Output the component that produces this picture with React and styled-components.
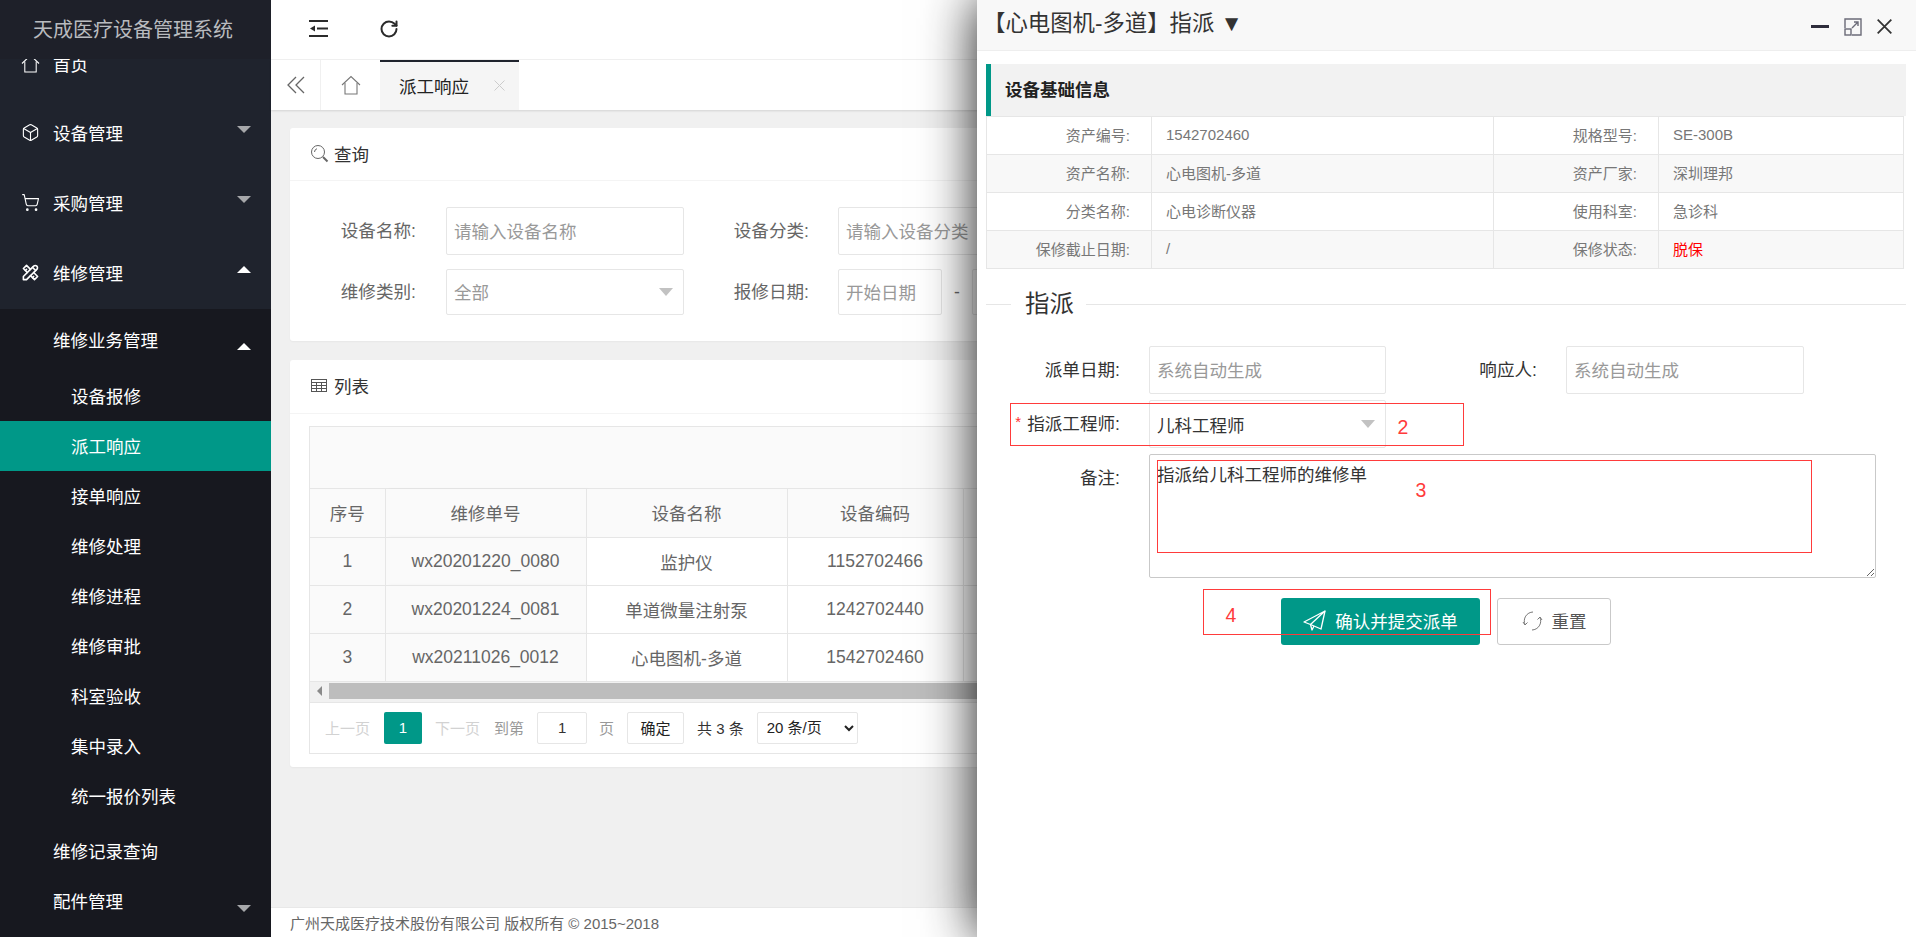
import React from "react";
import styled, { createGlobalStyle } from "styled-components";
import { Box, ShoppingCart, RotateCw } from "lucide-react";
import { TbTools } from "react-icons/tb";

const GlobalStyle = createGlobalStyle`
  * { box-sizing: border-box; }
  html, body { margin: 0; padding: 0; height: 100%; overflow: hidden; }
  body {
    font-family: "Liberation Sans", "Noto Sans CJK SC", sans-serif;
    font-size: 15px;
    color: #666;
    background: #f0f0f0;
  }
  input::placeholder, textarea::placeholder { color: #999; opacity: 1; }
`;

const Page = styled.div`
  position: relative;
  display: flex;
  width: 1916px;
  height: 937px;
  overflow: hidden;
`;

/* ---------- sidebar ---------- */
const Sidebar = styled.aside`
  flex: 0 0 271px;
  height: 100%;
  display: flex;
  flex-direction: column;
  background: #1f232d;
  color: #fff;
  overflow: hidden;
`;

const Logo = styled.div`
  position: relative;
  z-index: 1;
  flex: 0 0 59px;
  padding: 0 5px 3px 0;
  display: flex;
  align-items: center;
  justify-content: center;
  background: #1e2029;
  color: #b9bbbf;
  font-size: 20px;
`;

const Menu = styled.nav`
  margin-top: -29px;
`;

const MenuItem = styled.div`
  position: relative;
  height: ${(p) => p.$h || 70}px;
  display: flex;
  align-items: center;
  gap: 13px;
  padding: 0 0 2px 21px;
  font-size: 17.5px;
  svg { flex: 0 0 19px; }
`;

const Arrow = styled.i`
  position: absolute;
  right: 20px;
  top: ${(p) => p.$top}px;
  width: 0;
  height: 0;
  border-left: 7px solid transparent;
  border-right: 7px solid transparent;
  border-top: ${(p) => (p.$up ? "0" : "7px solid #a6a7aa")};
  border-bottom: ${(p) => (p.$up ? "7px solid #fff" : "0")};
`;

const SubMenu = styled.div`
  margin-top: 1px;
  background: #17181f;
  padding-bottom: 60px;
`;

const SubTitle = styled.div`
  position: relative;
  height: ${(p) => p.$h || 50}px;
  display: flex;
  align-items: center;
  padding: 0 0 2px 53px;
  font-size: 17.5px;
`;

const SubGap = styled.div`
  height: 5px;
`;

const SubItem = styled.div`
  height: 50px;
  display: flex;
  align-items: center;
  padding: 0 0 2px 71px;
  font-size: 17.5px;
  background: ${(p) => (p.$active ? "#009888" : "transparent")};
`;

/* ---------- main ---------- */
const Main = styled.main`
  flex: 1;
  min-width: 0;
  display: flex;
  flex-direction: column;
  height: 100%;
`;

const TopBar = styled.header`
  flex: 0 0 60px;
  display: flex;
  align-items: center;
  gap: 51px;
  padding: 0 0 2px 38px;
  background: #fff;
  border-bottom: 1px solid #f1f1f1;
  color: #2b2b2b;
`;

const TabBar = styled.div`
  flex: 0 0 50px;
  display: flex;
  background: #fff;
  box-shadow: 0 1px 2px rgba(0, 0, 0, 0.12);
  position: relative;
`;

const TabIcon = styled.div`
  width: ${(p) => p.$w}px;
  display: flex;
  align-items: center;
  justify-content: center;
  color: #777;
  border-right: ${(p) => (p.$line ? "1px solid #f0f0f0" : "0")};
`;

const Tab = styled.div`
  width: 139px;
  display: flex;
  align-items: center;
  justify-content: space-between;
  padding: 0 14px 2px 19px;
  background: #f5f5f5;
  border-top: 2px solid #1f232d;
  color: #222;
  font-size: 17.5px;
`;

const TabClose = styled.span`
  display: flex;
  color: #ccc;
`;

const Content = styled.div`
  flex: 1;
  min-height: 0;
  padding: 18px 20px 0 19px;
  background: #f0f0f0;
`;

const Card = styled.section`
  background: #fff;
  border-radius: 3px;
  margin-bottom: 19px;
  box-shadow: 0 1px 2px rgba(0, 0, 0, 0.04);
`;

const CardHeader = styled.div`
  height: ${(p) => p.$h}px;
  display: flex;
  align-items: center;
  gap: 5px;
  padding: 0 0 2px 20px;
  border-bottom: 1px solid #f4f4f4;
  font-size: 17.5px;
  color: #333;
`;

const QueryBody = styled.div`
  display: flex;
  flex-direction: column;
  gap: 14px;
  padding: 26px 0;
`;

const QueryRow = styled.div`
  display: flex;
  align-items: center;
  height: ${(p) => p.$h}px;
`;

const QueryLabel = styled.label`
  width: ${(p) => p.$w}px;
  margin-right: ${(p) => p.$m}px;
  padding-bottom: 3px;
  text-align: right;
  font-size: 17.6px;
  color: #666;
`;

const TextInput = styled.input`
  width: ${(p) => p.$w}px;
  height: 100%;
  padding: ${(p) => (p.$value ? "0 7px" : "2px 7px 0")};
  border: 1px solid #e6e6e6;
  border-radius: 2px;
  background: #fff;
  color: #333;
  font: inherit;
  font-size: 17.5px;
  outline: none;
`;

const SelectBox = styled.div`
  position: relative;
  display: flex;
  width: ${(p) => p.$w}px;
  height: 100%;
`;

const SelectArrow = styled.i`
  position: absolute;
  right: 11px;
  top: 50%;
  margin-top: -4px;
  width: 0;
  height: 0;
  border-left: 7px solid transparent;
  border-right: 7px solid transparent;
  border-top: 8px solid #c2c2c2;
`;

const Dash = styled.span`
  width: 30px;
  text-align: center;
  font-size: 17.5px;
  color: #666;
`;

/* ---------- list table ---------- */
const TableWrap = styled.div`
  margin: 12px 19px 0;
  padding-bottom: 13px;
`;

const TableBox = styled.div`
  border: 1px solid #e6e6e6;
`;

const Toolbar = styled.div`
  height: 62px;
  background: #fafafa;
  border-bottom: 1px solid #e6e6e6;
`;

const ListTable = styled.table`
  width: 100%;
  border-collapse: collapse;
  table-layout: fixed;
`;

const Th = styled.th`
  height: 48px;
  padding: 0;
  font-weight: 400;
  font-size: 17.5px;
  color: #666;
  background: #fafafa;
  border-right: 1px solid #e6e6e6;
  border-bottom: 1px solid #e6e6e6;
  box-shadow: ${(p) => (p.$frozenEnd ? "3px 0 4px -1px rgba(0, 0, 0, 0.06)" : "none")};
`;

const Td = styled.td`
  height: 48px;
  padding: 0;
  text-align: center;
  font-size: 17.5px;
  color: #666;
  background: ${(p) => (p.$frozen ? "#fafafa" : "#fff")};
  border-right: 1px solid #e6e6e6;
  border-bottom: 1px solid #e6e6e6;
  box-shadow: ${(p) => (p.$frozenEnd ? "3px 0 4px -1px rgba(0, 0, 0, 0.06)" : "none")};
`;

const ScrollBar = styled.div`
  height: 21px;
  display: flex;
  align-items: center;
  padding: 0 0 1px 7px;
  gap: 7px;
  background: #f1f1f1;
  border-bottom: 1px solid #e6e6e6;
`;

const ScrollLeft = styled.i`
  width: 0;
  height: 0;
  border-top: 5px solid transparent;
  border-bottom: 5px solid transparent;
  border-right: 5px solid #8a8a8a;
`;

const ScrollThumb = styled.div`
  flex: 1;
  height: 16px;
  background: #bdbdbd;
`;

const Pager = styled.div`
  height: 50px;
  display: flex;
  align-items: center;
  padding-left: 15px;
  font-size: 15px;
  color: #333;
`;

const PagerText = styled.span`
  color: ${(p) => (p.$off ? "#d2d2d2" : p.$soft ? "#999" : "#333")};
  margin-right: ${(p) => p.$mr}px;
`;

const PageNum = styled.span`
  width: 38px;
  height: 32px;
  margin-right: 13px;
  display: flex;
  align-items: center;
  justify-content: center;
  background: #009888;
  color: #fff;
  border-radius: 2px;
`;

const PageInput = styled.input`
  width: 50px;
  height: 32px;
  margin-right: 12px;
  border: 1px solid #e6e6e6;
  border-radius: 2px;
  text-align: center;
  font: inherit;
  color: #333;
`;

const PageGo = styled.button`
  width: 57px;
  height: 32px;
  margin-right: 13px;
  padding: 0;
  border: 1px solid #e6e6e6;
  border-radius: 2px;
  background: #fff;
  font: inherit;
  color: #222;
`;

const PageSize = styled.select`
  width: 101px;
  height: 32px;
  padding: 0 0 0 5px;
  border: 1px solid #e6e6e6;
  border-radius: 2px;
  background: #fff;
  font: inherit;
  color: #222;
`;

const Footer = styled.footer`
  flex: 0 0 30px;
  display: flex;
  align-items: center;
  padding-left: 19px;
  background: #fff;
  border-top: 1px solid #e8e8e8;
  color: #666;
  font-size: 15px;
`;

/* ---------- layer panel ---------- */
const Panel = styled.div`
  position: absolute;
  top: 0;
  left: 977px;
  width: 939px;
  height: 937px;
  background: #fff;
  box-shadow: 0 0 50px rgba(0, 0, 0, 0.9);
`;

const PanelHead = styled.div`
  height: 51px;
  display: flex;
  align-items: center;
  justify-content: space-between;
  padding: 0 24px 8px 6px;
  background: #f8f8f8;
  border-bottom: 1px solid #eee;
  font-size: 22.4px;
  color: #333;
`;

const PanelTools = styled.div`
  display: flex;
  align-items: center;
  gap: 15px;
  margin-top: 11px;
`;

const MinBar = styled.span`
  width: 18px;
  height: 3px;
  background: #2e2d3c;
`;

const InfoSection = styled.div`
  margin: 13px 10px 0 9px;
`;

const InfoTitle = styled.div`
  height: 52px;
  display: flex;
  align-items: center;
  padding: 0 0 3px 14px;
  border-left: 5px solid #009888;
  background: #f2f2f2;
  font-size: 17.5px;
  font-weight: 700;
  color: #222;
`;

const InfoTable = styled.table`
  width: calc(100% - 2px);
  border-collapse: collapse;
  table-layout: fixed;
`;

const InfoTd = styled.td`
  height: 38px;
  padding: ${(p) => (p.$label ? "0 21px 2px 0" : "0 0 2px 14px")};
  text-align: ${(p) => (p.$label ? "right" : "left")};
  border: 1px solid #e6e6e6;
  font-size: 15px;
  color: ${(p) => (p.$danger ? "#ff0000" : "#777")};
  background: ${(p) => (p.$odd ? "#f8f8f8" : "#fff")};
`;

const Legend = styled.div`
  display: flex;
  align-items: center;
  gap: 14px;
  height: 34px;
  margin: 18px 10px 0 9px;
  font-size: 24.4px;
  color: #333;
  line-height: 30px;
  &::before {
    content: "";
    width: 25px;
    height: 1px;
    background: #e6e6e6;
  }
  &::after {
    content: "";
    flex: 1;
    height: 1px;
    margin-left: -2px;
    background: #e6e6e6;
  }
`;

const AssignForm = styled.form`
  display: flex;
  flex-direction: column;
  gap: 6px;
  margin-top: 25px;
`;

const FormRow = styled.div`
  display: flex;
  align-items: ${(p) => (p.$top ? "flex-start" : "center")};
  height: ${(p) => p.$h}px;
`;

const FormLabel = styled.label`
  width: 143px;
  margin: 0 29px 0 ${(p) => p.$ml || 0}px;
  padding: ${(p) => (p.$top ? "10px 0 0" : "0 0 3px")};
  text-align: right;
  font-size: 17.6px;
  color: #333;
`;

const Star = styled.span`
  color: #ff3030;
  font-size: 15px;
  margin-right: 6px;
  vertical-align: 3px;
`;

const Remark = styled.textarea`
  width: 727px;
  height: 124px;
  padding: 8px 7px;
  border: 1px solid #c9c9c9;
  border-radius: 2px;
  font: inherit;
  font-size: 17.5px;
  line-height: 24px;
  color: #333;
  outline: none;
`;

const ButtonRow = styled.div`
  display: flex;
  gap: 17px;
  margin-top: 14px;
  padding-left: 304px;
`;

const PrimaryButton = styled.button`
  width: 199px;
  height: 47px;
  display: flex;
  align-items: center;
  justify-content: center;
  gap: 9px;
  padding: 0 0 2px;
  border: 0;
  border-radius: 3px;
  background: #009888;
  color: #fff;
  font: inherit;
  font-size: 17.5px;
`;

const ResetButton = styled.button`
  width: 114px;
  height: 47px;
  display: flex;
  align-items: center;
  justify-content: center;
  gap: 9px;
  padding: 0 0 2px;
  border: 1px solid #c9c9c9;
  border-radius: 3px;
  background: #fff;
  color: #555;
  font: inherit;
  font-size: 17.5px;
`;

/* hand drawn marks on the screenshot */
const RedBox = styled.div`
  position: absolute;
  left: ${(p) => p.$l}px;
  top: ${(p) => p.$t}px;
  width: ${(p) => p.$w}px;
  height: ${(p) => p.$h}px;
  border: 1px solid #ff3b3b;
  pointer-events: none;
`;

const RedNum = styled.span`
  position: absolute;
  left: ${(p) => p.$l}px;
  top: ${(p) => p.$t}px;
  transform: translate(-50%, -50%);
  color: #ff3b3b;
  font-size: 19.5px;
`;

const HomeIcon = ({ size = 20 }) => (
  <svg width={size} height={size} viewBox="0 0 20 20" fill="none" stroke="currentColor" strokeWidth="1.1">
    <path d="M1 10 L10 1.5 L19 10" />
    <path d="M4 8 V19 H16 V8" />
  </svg>
);

const OutdentIcon = () => (
  <svg width="19" height="17" viewBox="0 0 19 17" fill="currentColor">
    <rect x="0" y="0" width="19" height="2" />
    <rect x="8" y="7.5" width="11" height="2" />
    <rect x="0" y="15" width="19" height="2" />
    <path d="M1 8.5 L6 5.5 V11.5 Z" />
  </svg>
);

const DoubleLeftIcon = () => (
  <svg width="18" height="18" viewBox="0 0 18 18" fill="none" stroke="#666" strokeWidth="1.3">
    <path d="M9 1 L1 9 L9 17" />
    <path d="M17 1 L9 9 L17 17" />
  </svg>
);

const SearchIcon = () => (
  <svg width="19" height="19" viewBox="0 0 19 19" fill="none" stroke="#666" strokeWidth="1">
    <circle cx="8" cy="8" r="6.5" />
    <path d="M4.5 8 A3.5 3.5 0 0 1 7 4.7" />
    <path d="M13 13 L17.5 17.5" strokeWidth="2" />
  </svg>
);

const GridIcon = () => (
  <svg width="19" height="13" viewBox="0 0 19 13" fill="none" stroke="#555" strokeWidth="1">
    <rect x="1.5" y="0.5" width="15" height="12" />
    <path d="M1.5 3.5 H16.5 M1.5 6.5 H16.5 M1.5 9.5 H16.5 M6.5 3.5 V12.5 M11.5 3.5 V12.5" />
  </svg>
);

const CloseIcon = ({ size = 11, width = 1 }) => (
  <svg width={size} height={size} viewBox="0 0 11 11" fill="none" stroke="currentColor" strokeWidth={width}>
    <path d="M0.5 0.5 L10.5 10.5 M10.5 0.5 L0.5 10.5" />
  </svg>
);

const MaxIcon = () => (
  <svg width="18" height="18" viewBox="0 0 18 18" fill="none" stroke="#6b6b78" strokeWidth="1.4">
    <path d="M1 10 V1 H17 V17 H8" />
    <rect x="1" y="11" width="6" height="6" />
    <path d="M8 10 L14 4 M10 4 H14 V8" />
  </svg>
);

const PlaneIcon = () => (
  <svg width="23" height="21" viewBox="0 0 23 21" fill="none" stroke="#fff" strokeWidth="1.3" strokeLinejoin="round">
    <path d="M22 1 L1 12 L7.5 14.5 Z" />
    <path d="M22 1 L18 19 L7.5 14.5" />
    <path d="M11 16 L9 20 L7.5 14.5" />
  </svg>
);

const RefreshIcon = () => (
  <svg width="21" height="22" viewBox="0 0 21 22" fill="none" stroke="#777" strokeWidth="1">
    <path d="M3 14.5 A9 9 0 0 1 11 2" />
    <path d="M18 7.5 A9 9 0 0 1 10 20" />
    <path d="M1 12 L3 15 L5.5 12.5" />
    <path d="M20 10 L18 7 L15.5 9.5" />
  </svg>
);

const subItems = ["设备报修", "派工响应", "接单响应", "维修处理", "维修进程", "维修审批", "科室验收", "集中录入", "统一报价列表"];

const listRows = [
  ["1", "wx20201220_0080", "监护仪", "1152702466"],
  ["2", "wx20201224_0081", "单道微量注射泵", "1242702440"],
  ["3", "wx20211026_0012", "心电图机-多道", "1542702460"],
];

const infoRows = [
  ["资产编号:", "1542702460", "规格型号:", "SE-300B"],
  ["资产名称:", "心电图机-多道", "资产厂家:", "深圳理邦"],
  ["分类名称:", "心电诊断仪器", "使用科室:", "急诊科"],
  ["保修截止日期:", "/", "保修状态:", "脱保"],
];

export default function App() {
  return (
    <Page>
      <GlobalStyle />
      <Sidebar>
        <Logo>天成医疗设备管理系统</Logo>
        <Menu>
          <MenuItem $h={68}><HomeIcon size={19} />首页</MenuItem>
          <MenuItem><Box size={19} strokeWidth={1.4} />设备管理<Arrow $top={28} /></MenuItem>
          <MenuItem><ShoppingCart size={19} strokeWidth={1.4} />采购管理<Arrow $top={28} /></MenuItem>
          <MenuItem><TbTools size={19} />维修管理<Arrow $top={28} $up /></MenuItem>
          <SubMenu>
            <SubTitle $h={62}>维修业务管理<Arrow $top={34} $up /></SubTitle>
            {subItems.map((item) => (
              <SubItem key={item} $active={item === "派工响应"}>{item}</SubItem>
            ))}
            <SubGap />
            <SubTitle>维修记录查询</SubTitle>
            <SubTitle>配件管理<Arrow $top={29} /></SubTitle>
          </SubMenu>
        </Menu>
      </Sidebar>

      <Main>
        <TopBar>
          <OutdentIcon />
          <RotateCw size={20} strokeWidth={2.4} />
        </TopBar>
        <TabBar>
          <TabIcon $w={50} $line><DoubleLeftIcon /></TabIcon>
          <TabIcon $w={59}><HomeIcon /></TabIcon>
          <Tab>派工响应<TabClose><CloseIcon /></TabClose></Tab>
        </TabBar>
        <Content>
          <Card>
            <CardHeader $h={53}><SearchIcon />查询</CardHeader>
            <QueryBody>
              <QueryRow $h={48}>
                <QueryLabel $w={126} $m={30}>设备名称:</QueryLabel>
                <TextInput $w={238} placeholder="请输入设备名称" />
                <QueryLabel $w={125} $m={29}>设备分类:</QueryLabel>
                <TextInput $w={238} placeholder="请输入设备分类" />
              </QueryRow>
              <QueryRow $h={46}>
                <QueryLabel $w={126} $m={30}>维修类别:</QueryLabel>
                <SelectBox $w={238}>
                  <TextInput $w={238} placeholder="全部" readOnly />
                  <SelectArrow />
                </SelectBox>
                <QueryLabel $w={125} $m={29}>报修日期:</QueryLabel>
                <TextInput $w={104} placeholder="开始日期" />
                <Dash>-</Dash>
                <TextInput $w={104} placeholder="结束日期" />
              </QueryRow>
            </QueryBody>
          </Card>
          <Card>
            <CardHeader $h={54}><GridIcon />列表</CardHeader>
            <TableWrap>
              <TableBox>
                <Toolbar />
                <ListTable>
                  <colgroup>
                    <col width="75" />
                    <col width="201" />
                    <col width="201" />
                    <col width="176" />
                    <col />
                  </colgroup>
                  <thead>
                    <tr>
                      <Th>序号</Th>
                      <Th $frozenEnd>维修单号</Th>
                      <Th>设备名称</Th>
                      <Th>设备编码</Th>
                      <Th />
                    </tr>
                  </thead>
                  <tbody>
                    {listRows.map((row) => (
                      <tr key={row[0]}>
                        <Td $frozen>{row[0]}</Td>
                        <Td $frozen $frozenEnd>{row[1]}</Td>
                        <Td>{row[2]}</Td>
                        <Td>{row[3]}</Td>
                        <Td />
                      </tr>
                    ))}
                  </tbody>
                </ListTable>
                <ScrollBar>
                  <ScrollLeft />
                  <ScrollThumb />
                </ScrollBar>
                <Pager>
                  <PagerText $off $mr={14}>上一页</PagerText>
                  <PageNum>1</PageNum>
                  <PagerText $off $mr={14}>下一页</PagerText>
                  <PagerText $soft $mr={13}>到第</PagerText>
                  <PageInput defaultValue="1" />
                  <PagerText $soft $mr={13}>页</PagerText>
                  <PageGo>确定</PageGo>
                  <PagerText $mr={13}>共 3 条</PagerText>
                  <PageSize defaultValue="20">
                    <option value="20">20 条/页</option>
                  </PageSize>
                </Pager>
              </TableBox>
            </TableWrap>
          </Card>
        </Content>
        <Footer>广州天成医疗技术股份有限公司 版权所有 © 2015~2018</Footer>
      </Main>

      <Panel>
        <PanelHead>
          <span>【心电图机-多道】指派 ▼</span>
          <PanelTools>
            <MinBar />
            <MaxIcon />
            <CloseIcon size={15} width={1.3} />
          </PanelTools>
        </PanelHead>
        <InfoSection>
          <InfoTitle>设备基础信息</InfoTitle>
          <InfoTable>
            <colgroup>
              <col width="165" />
              <col width="342" />
              <col width="165" />
              <col />
            </colgroup>
            <tbody>
              {infoRows.map((row, i) => (
                <tr key={row[0]}>
                  <InfoTd $label $odd={i % 2 === 1}>{row[0]}</InfoTd>
                  <InfoTd $odd={i % 2 === 1}>{row[1]}</InfoTd>
                  <InfoTd $label $odd={i % 2 === 1}>{row[2]}</InfoTd>
                  <InfoTd $odd={i % 2 === 1} $danger={row[3] === "脱保"}>{row[3]}</InfoTd>
                </tr>
              ))}
            </tbody>
          </InfoTable>
        </InfoSection>
        <Legend>指派</Legend>
        <AssignForm>
          <FormRow $h={48}>
            <FormLabel>派单日期:</FormLabel>
            <TextInput $w={237} placeholder="系统自动生成" readOnly />
            <FormLabel $ml={8}>响应人:</FormLabel>
            <TextInput $w={238} placeholder="系统自动生成" readOnly />
          </FormRow>
          <FormRow $h={48}>
            <FormLabel><Star>*</Star>指派工程师:</FormLabel>
            <SelectBox $w={237}>
              <TextInput $w={237} $value defaultValue="儿科工程师" readOnly />
              <SelectArrow />
            </SelectBox>
          </FormRow>
          <FormRow $h={124} $top>
            <FormLabel $top>备注:</FormLabel>
            <Remark defaultValue="指派给儿科工程师的维修单" />
          </FormRow>
          <ButtonRow>
            <PrimaryButton type="button"><PlaneIcon />确认并提交派单</PrimaryButton>
            <ResetButton type="button"><RefreshIcon />重置</ResetButton>
          </ButtonRow>
        </AssignForm>

        <RedBox $l={33} $t={403} $w={454} $h={43} />
        <RedNum $l={426} $t={427}>2</RedNum>
        <RedBox $l={180} $t={460} $w={655} $h={93} />
        <RedNum $l={444} $t={490}>3</RedNum>
        <RedBox $l={226} $t={589} $w={288} $h={46} />
        <RedNum $l={254} $t={615}>4</RedNum>
      </Panel>
    </Page>
  );
}
